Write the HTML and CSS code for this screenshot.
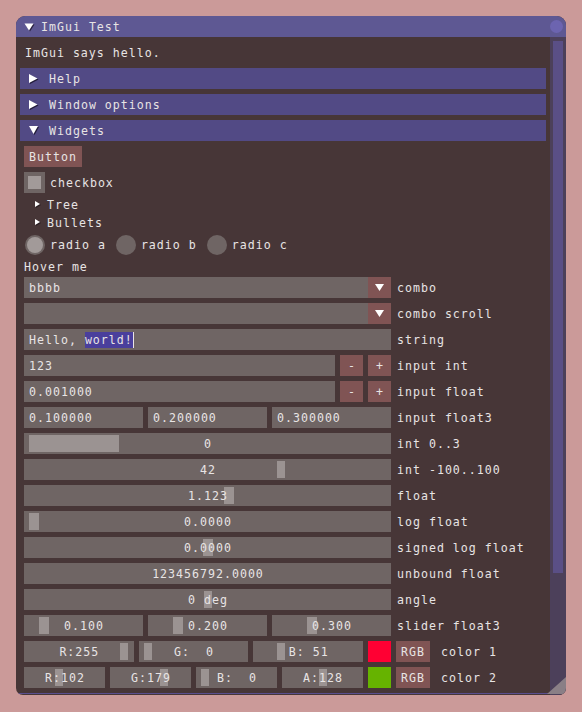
FILE: index.html
```html
<!DOCTYPE html>
<html>
<head>
<meta charset="utf-8">
<link rel="stylesheet" href="styles.css">
</head>
<body>
<div class="window">
  <div class="titlebar">
    <svg class="tri title-tri" width="11" height="9" viewBox="0 0 11 9"><polygon points="1.5,1.5 10.5,1.5 6,8.5" fill="#2a2240"/><polygon points="0.5,0.5 9.5,0.5 5,7.5" fill="#fff"/></svg>
    <span class="title">ImGui Test</span>
    <span class="close"></span>
  </div>
  <div class="body">
    <div class="main">
      <div class="content">
        <div class="text hello"><span>ImGui says hello.</span></div>
        <div class="header h-first">
          <svg class="tri" width="10" height="10" viewBox="0 0 10 10"><polygon points="1,1 9.5,5.5 1,10" fill="#221c3a"/><polygon points="0,0 8.5,4.5 0,9" fill="#fff"/></svg>
          <span>Help</span>
        </div>
        <div class="header">
          <svg class="tri" width="10" height="10" viewBox="0 0 10 10"><polygon points="1,1 9.5,5.5 1,10" fill="#221c3a"/><polygon points="0,0 8.5,4.5 0,9" fill="#fff"/></svg>
          <span>Window options</span>
        </div>
        <div class="header">
          <svg class="tri" width="10" height="10" viewBox="0 0 10 10"><polygon points="1,1 10,1 5.5,9" fill="#221c3a"/><polygon points="0,0 9,0 4.5,8" fill="#fff"/></svg>
          <span>Widgets</span>
        </div>
        <div class="line"><div class="button"><span>Button</span></div></div>
        <div class="line">
          <div class="checkbox"><div class="check"></div></div>
          <span class="lbl">checkbox</span>
        </div>
        <div class="tree t-first">
          <svg class="tree-tri" width="6" height="7" viewBox="0 0 6 7"><polygon points="1,1 6,4 1,7" fill="#2a1f22"/><polygon points="0,0 5,3 0,6" fill="#fff"/></svg>
          <span>Tree</span>
        </div>
        <div class="tree">
          <svg class="tree-tri" width="6" height="7" viewBox="0 0 6 7"><polygon points="1,1 6,4 1,7" fill="#2a1f22"/><polygon points="0,0 5,3 0,6" fill="#fff"/></svg>
          <span>Bullets</span>
        </div>
        <div class="line radios">
          <div class="radio-item"><span class="radio on"><span class="dot"></span></span><span class="lbl">radio a</span></div>
          <div class="radio-item"><span class="radio"></span><span class="lbl">radio b</span></div>
          <div class="radio-item"><span class="radio"></span><span class="lbl">radio c</span></div>
        </div>
        <div class="text hover"><span>Hover me</span></div>

        <div class="row">
          <div class="frame combo"><span class="val">bbbb</span><span class="arrow"><svg width="9" height="7" viewBox="0 0 9 7"><polygon points="0,0 9,0 4.5,7" fill="#fff"/></svg></span></div>
          <span class="label">combo</span>
        </div>
        <div class="row">
          <div class="frame combo"><span class="val"></span><span class="arrow"><svg width="9" height="7" viewBox="0 0 9 7"><polygon points="0,0 9,0 4.5,7" fill="#fff"/></svg></span></div>
          <span class="label">combo scroll</span>
        </div>
        <div class="row">
          <div class="frame full"><span class="val">Hello, <span class="sel">world!</span></span></div>
          <span class="label">string</span>
        </div>
        <div class="row">
          <div class="frame field"><span class="val">123</span></div>
          <div class="sbtn"><span>-</span></div>
          <div class="sbtn"><span>+</span></div>
          <span class="label">input int</span>
        </div>
        <div class="row">
          <div class="frame field"><span class="val">0.001000</span></div>
          <div class="sbtn"><span>-</span></div>
          <div class="sbtn"><span>+</span></div>
          <span class="label">input float</span>
        </div>
        <div class="row">
          <div class="group">
            <div class="frame"><span class="val">0.100000</span></div>
            <div class="frame"><span class="val">0.200000</span></div>
            <div class="frame"><span class="val">0.300000</span></div>
          </div>
          <span class="label">input float3</span>
        </div>
        <div class="row">
          <div class="frame full slider"><span class="grab" style="left:5px;width:90px"></span><span class="cval">0</span></div>
          <span class="label">int 0..3</span>
        </div>
        <div class="row">
          <div class="frame full slider"><span class="grab" style="left:253px;width:8px"></span><span class="cval">42</span></div>
          <span class="label">int -100..100</span>
        </div>
        <div class="row">
          <div class="frame full slider"><span class="grab" style="left:200px;width:10px"></span><span class="cval">1.123</span></div>
          <span class="label">float</span>
        </div>
        <div class="row">
          <div class="frame full slider"><span class="grab" style="left:5px;width:10px"></span><span class="cval">0.0000</span></div>
          <span class="label">log float</span>
        </div>
        <div class="row">
          <div class="frame full slider"><span class="grab" style="left:179px;width:10px"></span><span class="cval">0.0000</span></div>
          <span class="label">signed log float</span>
        </div>
        <div class="row">
          <div class="frame full slider"><span class="cval">123456792.0000</span></div>
          <span class="label">unbound float</span>
        </div>
        <div class="row">
          <div class="frame full slider"><span class="grab" style="left:180px;width:8px"></span><span class="cval">0 deg</span></div>
          <span class="label">angle</span>
        </div>
        <div class="row">
          <div class="group">
            <div class="frame slider"><span class="grab" style="left:15px;width:10px"></span><span class="cval">0.100</span></div>
            <div class="frame slider"><span class="grab" style="left:25px;width:10px"></span><span class="cval">0.200</span></div>
            <div class="frame slider"><span class="grab" style="left:35px;width:10px"></span><span class="cval">0.300</span></div>
          </div>
          <span class="label">slider float3</span>
        </div>
        <div class="row">
          <div class="group cgroup">
            <div class="frame slider"><span class="grab" style="left:96px;width:8px"></span><span class="cval">R:255</span></div>
            <div class="frame slider"><span class="grab" style="left:5px;width:8px"></span><span class="cval">G:  0</span></div>
            <div class="frame slider"><span class="grab" style="left:24px;width:8px"></span><span class="cval">B: 51</span></div>
          </div>
          <div class="swatch red"></div>
          <div class="rgb"><span>RGB</span></div>
          <span class="label clabel">color 1</span>
        </div>
        <div class="row">
          <div class="group cgroup">
            <div class="frame slider"><span class="grab" style="left:31px;width:8px"></span><span class="cval">R:102</span></div>
            <div class="frame slider"><span class="grab" style="left:50px;width:8px"></span><span class="cval">G:179</span></div>
            <div class="frame slider"><span class="grab" style="left:5px;width:8px"></span><span class="cval">B:  0</span></div>
            <div class="frame slider"><span class="grab" style="left:37px;width:8px"></span><span class="cval">A:128</span></div>
          </div>
          <div class="swatch green"></div>
          <div class="rgb"><span>RGB</span></div>
          <span class="label clabel">color 2</span>
        </div>
      </div>
      <div class="bottom-line"></div>
    </div>
    <div class="scrollbar"><div class="scroll-grab"></div></div>
  </div>
  <div class="grip"></div>
</div>
</body>
</html>
```

FILE: styles.css
```css
html, body {
  margin: 0;
  padding: 0;
}
body {
  background: #cb9a99;
  font-family: "DejaVu Sans Mono", monospace;
  font-size: 11.6px;
  letter-spacing: 1px;
  color: #e8e4e4;
  white-space: nowrap;
}
.window {
  margin: 16px 0 0 16px;
  width: 550px;
  height: 679px;
  background: #473637;
  border-radius: 9px 9px 7px 7px;
  overflow: hidden;
  position: relative;
  display: flex;
  flex-direction: column;
}
.titlebar {
  height: 21px;
  flex: none;
  background: #5e5893;
  display: flex;
  align-items: center;
  line-height: 21px;
}
.title-tri {
  margin-left: 8px;
  margin-top: 1px;
}
.title {
  margin-left: 6px;
  flex: 1;
  position: relative;
  top: 1px;
}
.close {
  width: 13px;
  height: 13px;
  border-radius: 50%;
  background: #6c64b0;
  margin-right: 3px;
}
.body {
  flex: 1;
  display: flex;
  min-height: 0;
}
.main {
  width: 534px;
  display: flex;
  flex-direction: column;
}
.content {
  flex: 1;
  overflow: hidden;
  padding: 8px 0 0 8px;
  display: flex;
  flex-direction: column;
}
.bottom-line {
  height: 1px;
  background: #5a4f8f;
  margin-bottom: 1px;
  flex: none;
}
.scrollbar {
  width: 16px;
  background: #4c405a;
  display: flex;
  flex-direction: column;
}
.scroll-grab {
  margin: 4px 3px 0 3px;
  height: 532px;
  background: #5a4f86;
}
.grip {
  position: absolute;
  right: 0;
  bottom: 1px;
  width: 19px;
  height: 17px;
  background: #8a7f86;
  clip-path: polygon(100% 0, 100% 100%, 0 100%);
}
.text {
  height: 13px;
  line-height: 13px;
  flex: none;
}
.text span {
  position: relative;
  top: 2px;
}
.hello {
  margin-left: 1px;
}
.header {
  height: 21px;
  line-height: 21px;
  flex: none;
  margin: 5px 4px 0 -4px;
  background: #524a85;
  display: flex;
  align-items: center;
  padding-left: 9px;
}
.header.h-first {
  margin-top: 10px;
}
.header span {
  margin-left: 10px;
  position: relative;
  top: 1px;
}
.line {
  margin-top: 5px;
  height: 21px;
  line-height: 21px;
  display: flex;
  align-items: center;
  flex: none;
}
.button {
  background: #805454;
  padding: 0 5px;
  height: 21px;
}
.button span {
  position: relative;
  top: 1px;
}
.checkbox {
  width: 21px;
  height: 21px;
  background: #6f6564;
  display: flex;
  align-items: center;
  justify-content: center;
}
.check {
  width: 13px;
  height: 13px;
  background: #a29a99;
}
.lbl {
  margin-left: 5px;
  position: relative;
  top: 1px;
}
.tree {
  height: 13px;
  line-height: 13px;
  display: flex;
  align-items: center;
  padding-left: 11px;
  margin-top: 5px;
  flex: none;
}
.tree.t-first {
  margin-top: 4px;
}
.tree span {
  margin-left: 6px;
  position: relative;
  top: 2px;
}
.tree-tri {
  position: relative;
  top: 1px;
}
.radios {
  margin-top: 6px;
  gap: 9px;
}
.radio-item {
  display: flex;
  align-items: center;
}
.radio {
  width: 20px;
  height: 20px;
  margin: 0 0 0 1px;
  border-radius: 50%;
  background: #6f6564;
  display: flex;
  align-items: center;
  justify-content: center;
}
.radio .dot {
  width: 16px;
  height: 16px;
  border-radius: 50%;
  background: #a29a99;
}
.hover {
  margin-top: 4px;
}
.row {
  margin-top: 5px;
  height: 21px;
  line-height: 21px;
  display: flex;
  gap: 5px;
  flex: none;
}
.frame {
  background: #6f6564;
  height: 21px;
  position: relative;
}
.frame .val {
  padding-left: 5px;
  position: relative;
  top: 1px;
}
.combo {
  width: 367px;
  display: flex;
}
.combo .val {
  flex: 1;
}
.arrow {
  width: 23px;
  height: 21px;
  background: #805454;
  display: flex;
  align-items: center;
  justify-content: center;
}
.full {
  width: 367px;
}
.field {
  width: 311px;
}
.sbtn {
  width: 23px;
  height: 21px;
  background: #805454;
  text-align: center;
  text-indent: 1px;
}
.sbtn span,
.rgb span {
  position: relative;
  top: 1px;
}
.group {
  width: 367px;
  display: flex;
  gap: 5px;
}
.group .frame {
  flex: 1;
  min-width: 0;
}
.group.cgroup {
  width: 339px;
}
.sel {
  display: inline-block;
  background: #4a3f9c;
  line-height: 16px;
  border-right: 1px solid #e8e4e4;
  margin-right: -1px;
}
.slider {
  text-align: center;
}
.grab {
  position: absolute;
  top: 2px;
  bottom: 2px;
  background: #9b9392;
}
.cval {
  position: relative;
  top: 1px;
  margin-right: -1px;
  white-space: pre;
}
.label {
  margin-left: 1px;
  position: relative;
  top: 1px;
}
.swatch {
  width: 23px;
  height: 21px;
}
.red {
  background: #ff0033;
}
.green {
  background: #66b300;
}
.rgb {
  width: 34px;
  height: 21px;
  background: #805454;
  text-align: center;
}
.clabel {
  margin-left: 6px;
}
```
